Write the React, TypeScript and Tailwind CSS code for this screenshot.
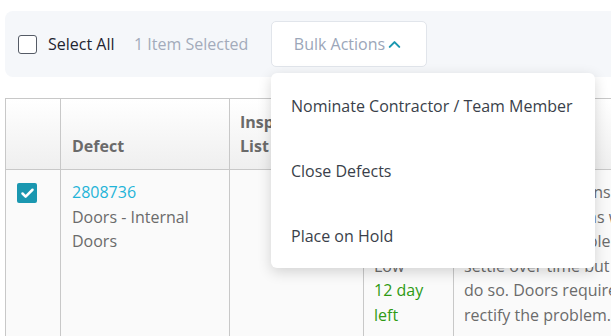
import { Check, ChevronUp } from 'lucide-react'

const font = { fontFamily: '"Open Sans", "Liberation Sans", sans-serif' }

const descLines = [
  'Internal door in ensuite and',
  'the rear bedrooms will not',
  'latched. This problem may',
  'settle over time but is unlikely to',
  'do so. Doors require adjusting to',
  'rectify the problem.',
]

function Toolbar() {
  return (
    <div className="flex h-[66px] items-center rounded-l-lg bg-[#f5f7fa] pl-[13px] text-[16px]">
      <span className="h-[19px] w-[19px] shrink-0 rounded-[3px] border-[1.5px] border-[#555b66] bg-white" />
      <span className="ml-[11px] w-[72px] shrink-0 whitespace-nowrap text-[#1e2430]">Select All</span>
      <span className="ml-[14px] w-[116px] shrink-0 whitespace-nowrap text-[#a3abbb]">1 Item Selected</span>
      <div className="relative ml-[21px]">
        <button className="flex h-[46px] w-[156px] items-center justify-center rounded-[5px] border border-[#e1e5eb] bg-white text-[#9ba6b9]">
          Bulk Actions
          <ChevronUp className="h-[19px] w-[19px] text-[#1a97b0]" strokeWidth={2.6} />
        </button>
        <div className="absolute left-0 top-[52px] z-10 flex w-[324px] flex-col rounded-[6px] bg-white shadow-[0_4px_14px_rgba(0,0,0,0.16)]">
          {['Nominate Contractor / Team Member', 'Close Defects', 'Place on Hold'].map(item => (
            <div key={item} className="flex h-[65px] items-center whitespace-nowrap px-[20px] text-[#3a3f4a]">
              {item}
            </div>
          ))}
        </div>
      </div>
    </div>
  )
}

function DefectTable() {
  return (
    <div className="mt-[21px] border-l border-t border-[#c8c8c8]">
      <div className="flex h-[71px] border-b border-[#c8c8c8] bg-gradient-to-b from-white to-[#efefef] text-[16px] font-bold leading-[24px] text-[#6a6a6a]">
        <div className="w-[55px] shrink-0 border-r border-[#c8c8c8]" />
        <div className="flex w-[169px] shrink-0 items-end border-r border-[#c8c8c8] px-[11px] pb-[11px]">Defect</div>
        <div className="flex w-[134px] shrink-0 items-end border-r border-[#c8c8c8] px-[10px] pb-[11px]">
          Inspection<br />List
        </div>
        <div className="flex w-[90px] shrink-0 items-end border-r border-[#c8c8c8] px-[10px] pb-[11px]">Priority</div>
        <div className="flex w-[260px] shrink-0 items-end px-[10px] pb-[11px]">Description</div>
      </div>
      <div className="flex h-[200px] bg-[#fafafa] text-[16px] leading-[24.5px] text-[#6b6b6b]">
        <div className="w-[55px] shrink-0 border-r border-[#c8c8c8] pl-[11px] pt-[13px]">
          <span className="flex h-[20px] w-[20px] items-center justify-center rounded-[2px] bg-[#1a97b0]">
            <Check className="h-[15px] w-[15px] text-white" strokeWidth={4} />
          </span>
        </div>
        <div className="w-[169px] shrink-0 border-r border-[#c8c8c8] px-[11px] pt-[10px]">
          <div className="text-[#1fb4d8]">2808736</div>
          <div>Doors - Internal</div>
          <div>Doors</div>
        </div>
        <div className="w-[134px] shrink-0 border-r border-[#c8c8c8]" />
        <div className="w-[90px] shrink-0 border-r border-[#c8c8c8] px-[10px] pt-[10px]">
          <div>Due</div>
          <div>20/05</div>
          <div>2021</div>
          <div>Low</div>
          <div className="text-[#2f9a14]">12 day</div>
          <div className="text-[#2f9a14]">left</div>
        </div>
        <div className="w-[260px] shrink-0 whitespace-nowrap px-[10px] pt-[10px]">
          {descLines.map(l => (
            <div key={l}>{l}</div>
          ))}
        </div>
      </div>
    </div>
  )
}

export default function App() {
  return (
    <div className="h-[336px] w-[611px] overflow-hidden bg-white pl-[5px] pt-[11px]" style={font}>
      <div className="w-[700px]">
        <Toolbar />
        <DefectTable />
      </div>
    </div>
  )
}
